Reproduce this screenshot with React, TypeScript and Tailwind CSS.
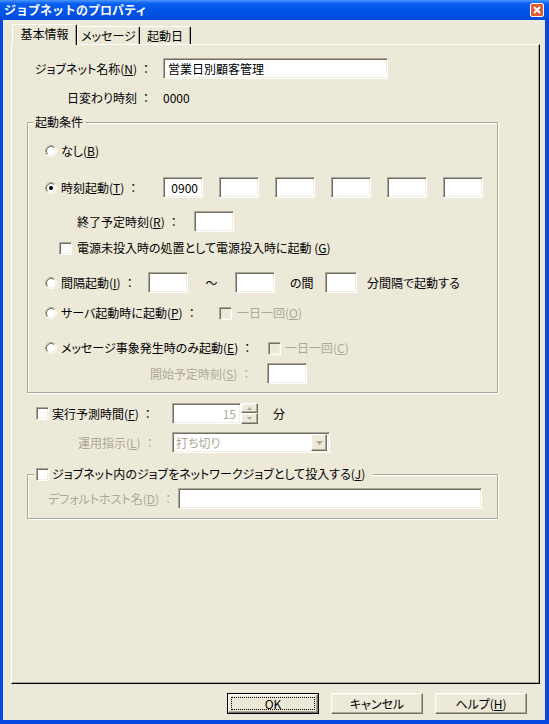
import React from "react";

type BoxProps = { className?: string; children?: React.ReactNode };

// 3D sunken frame (edit boxes, checkboxes)
const Sunken: React.FC<BoxProps> = ({ className = "", children }) => (
  <div
    className={`box-border border border-t-[#aca899] border-l-[#aca899] border-r-white border-b-white shadow-[inset_1px_1px_0_#716f64,inset_-1px_-1px_0_#f1efe2] ${className}`}
  >
    {children}
  </div>
);

// 3D raised frame (buttons, spinner)
const Raised: React.FC<BoxProps> = ({ className = "", children }) => (
  <div
    className={`box-border border border-t-white border-l-white border-r-[#716f64] border-b-[#716f64] bg-[#ece9d8] shadow-[inset_-1px_-1px_0_#aca899,inset_1px_1px_0_#f1efe2] ${className}`}
  >
    {children}
  </div>
);

// full-width colon, keeps its width (no palt)
const Colon = () => <span className="ml-[3px] [font-feature-settings:normal]">：</span>;

const Edit: React.FC<{ className?: string; value?: string; right?: boolean; dim?: boolean }> = ({
  className = "",
  value = "",
  right = false,
  dim = false,
}) => (
  <Sunken
    className={`flex h-[21px] shrink-0 items-center bg-white px-[4px] ${right ? "justify-end" : ""} ${dim ? "text-[#aca899]" : ""} ${className}`}
  >
    {value}
  </Sunken>
);

const Check: React.FC<{ className?: string; disabled?: boolean }> = ({ className = "", disabled = false }) => (
  <Sunken className={`h-[13px] w-[13px] shrink-0 ${disabled ? "bg-[#ece9d8]" : "bg-white"} ${className}`} />
);

const Radio: React.FC<{ className?: string; checked?: boolean }> = ({ className = "", checked = false }) => (
  <svg width="12" height="12" viewBox="0 0 12 12" className={`shrink-0 ${className}`}>
    <circle cx="6" cy="6" r="5" fill="white" />
    <path d="M2.11 9.89 A5.5 5.5 0 0 1 9.89 2.11" fill="none" stroke="#aca899" />
    <path d="M9.89 2.11 A5.5 5.5 0 0 1 2.11 9.89" fill="none" stroke="#ffffff" />
    <path d="M2.82 9.18 A4.5 4.5 0 0 1 9.18 2.82" fill="none" stroke="#716f64" />
    <path d="M9.18 2.82 A4.5 4.5 0 0 1 2.82 9.18" fill="none" stroke="#f1efe2" />
    {checked && <circle cx="6" cy="6" r="2" fill="black" />}
  </svg>
);

const Tri: React.FC<{ up?: boolean }> = ({ up = false }) => (
  <svg width="5" height="3" viewBox="0 0 5 3">
    <path d={up ? "M0 3 L2.5 0 L5 3 Z" : "M0 0 L5 0 L2.5 3 Z"} fill="#aca899" />
  </svg>
);

const App: React.FC = () => {
  return (
    <div className="flex h-[724px] w-[549px] flex-col bg-[#0846e0] text-[12px] leading-[14px] text-black [font-family:'Noto_Sans_CJK_JP',sans-serif] [font-feature-settings:'palt']">
      {/* タイトルバー */}
      <div className="flex h-[20px] items-center bg-[linear-gradient(180deg,#4a96ff_0%,#0a5ff0_18%,#0055e8_55%,#0050e0_85%,#0846e0_100%)] pl-[4px] pr-[5px]">
        <span className="font-bold text-white [font-feature-settings:normal]">ジョブネットのプロパティ</span>
        <div className="ml-auto flex h-[14px] w-[14px] items-center justify-center rounded-[2px] border border-white bg-[#dd5a32]">
          <svg width="8" height="8" viewBox="0 0 8 8">
            <path d="M1 1 L7 7 M7 1 L1 7" stroke="white" strokeWidth="2" />
          </svg>
        </div>
      </div>

      {/* クライアント領域 */}
      <div className="mb-[4px] ml-[3px] mr-[4px] flex flex-1 flex-col bg-[#ece9d8] pt-[4px]">
        {/* タブ */}
        <div className="flex h-[20px] items-end pl-[9px]">
          <div className="relative z-10 -mb-px flex h-[21px] w-[65px] items-center justify-center rounded-t-[2px] border-t border-r border-l border-t-white border-r-black border-l-white bg-[#ece9d8] pb-[2px] shadow-[inset_-1px_0_0_#aca899]">
            基本情報
          </div>
          <div className="flex h-[18px] w-[63px] items-center justify-center rounded-t-[2px] border-t border-r border-l border-t-white border-r-black border-l-white shadow-[inset_-1px_0_0_#aca899]">
            メッセージ
          </div>
          <div className="flex h-[18px] w-[51px] items-center justify-center rounded-t-[2px] border-t border-r border-t-white border-r-black shadow-[inset_-1px_0_0_#aca899]">
            起動日
          </div>
        </div>

        {/* タブページ */}
        <div className="ml-[8px] mr-[5px] flex h-[640px] flex-col border border-t-white border-r-black border-b-black border-l-white shadow-[inset_-1px_-1px_0_#aca899]">
          <div className="mt-[13px] flex h-[21px] items-center">
            <div className="w-[140px] text-right">
              ジョブネット名称(<u>N</u>)
              <Colon />
            </div>
            <Edit className="ml-[11px] w-[225px]" value="営業日別顧客管理" />
          </div>

          <div className="mt-[12px] flex h-[14px] items-center">
            <div className="w-[140px] text-right">
              日変わり時刻
              <Colon />
            </div>
            <div className="ml-[11px]">0000</div>
          </div>

          {/* 起動条件 */}
          <fieldset className="mt-[10px] ml-[15px] flex w-[471px] flex-col border border-[#aca899] pb-[8px] shadow-[inset_1px_1px_0_#fff,1px_1px_0_#fff]">
            <legend className="ml-[5px] bg-[#ece9d8] px-[2px] leading-[14px]">起動条件</legend>

            <div className="mt-[15px] flex h-[14px] items-center">
              <Radio className="ml-[17px]" />
              <span className="ml-[4px]">
                なし(<u>B</u>)
              </span>
            </div>

            <div className="mt-[19px] flex h-[21px] items-center">
              <Radio className="ml-[17px]" checked />
              <span className="ml-[4px] w-[102px]">
                時刻起動(<u>T</u>)
                <Colon />
              </span>
              <Edit className="w-[40px]" value="0900" right />
              <Edit className="ml-[16px] w-[40px]" />
              <Edit className="ml-[16px] w-[40px]" />
              <Edit className="ml-[16px] w-[40px]" />
              <Edit className="ml-[16px] w-[40px]" />
              <Edit className="ml-[16px] w-[40px]" />
            </div>

            <div className="mt-[13px] flex h-[21px] items-center">
              <span className="ml-[49px] w-[117px]">
                終了予定時刻(<u>R</u>)
                <Colon />
              </span>
              <Edit className="w-[40px]" />
            </div>

            <div className="mt-[9px] flex h-[14px] items-center">
              <Check className="ml-[31px]" />
              <span className="ml-[5px]">
                電源未投入時の処置として電源投入時に起動 (<u>G</u>)
              </span>
            </div>

            <div className="mt-[17px] flex h-[21px] items-center">
              <Radio className="ml-[17px]" />
              <span className="ml-[4px] w-[87px]">
                間隔起動(<u>I</u>)
                <Colon />
              </span>
              <Edit className="w-[40px]" />
              <span className="w-[47px] text-center">～</span>
              <Edit className="w-[40px]" />
              <span className="ml-[15px] w-[35px]">の間</span>
              <Edit className="w-[32px]" />
              <span className="ml-[10px]">分間隔で起動する</span>
            </div>

            <div className="mt-[13px] flex h-[14px] items-center">
              <Radio className="ml-[17px]" />
              <span className="ml-[4px] w-[158px]">
                サーバ起動時に起動(<u>P</u>)
                <Colon />
              </span>
              <Check disabled />
              <span className="ml-[5px] text-[#aca899]">
                一日一回(<u>O</u>)
              </span>
            </div>

            <div className="mt-[21px] flex h-[14px] items-center">
              <Radio className="ml-[17px]" />
              <span className="ml-[4px] w-[207px]">
                メッセージ事象発生時のみ起動(<u>E</u>)
                <Colon />
              </span>
              <Check disabled />
              <span className="ml-[4px] text-[#aca899]">
                一日一回(<u>C</u>)
              </span>
            </div>

            <div className="mt-[8px] flex h-[21px] items-center">
              <span className="ml-[122px] w-[117px] text-[#aca899]">
                開始予定時刻(<u>S</u>)
                <Colon />
              </span>
              <Edit className="w-[40px]" />
            </div>
          </fieldset>

          {/* 実行予測時間 */}
          <div className="mt-[10px] flex h-[21px] items-center">
            <Check className="ml-[24px]" />
            <span className="ml-[3px] w-[120px]">
              実行予測時間(<u>F</u>)
              <Colon />
            </span>
            <Edit className="w-[69px]" value="15" right dim />
            <div className="flex h-[21px] w-[17px] flex-col">
              <Raised className="flex h-[10px] items-center justify-center">
                <Tri up />
              </Raised>
              <Raised className="flex h-[11px] items-center justify-center">
                <Tri />
              </Raised>
            </div>
            <span className="ml-[15px]">分</span>
          </div>

          <div className="mt-[8px] flex h-[21px] items-center">
            <span className="ml-[66px] w-[94px] text-[#aca899]">
              運用指示(<u>L</u>)
              <Colon />
            </span>
            <Sunken className="flex h-[21px] w-[158px] items-center bg-white pr-[2px] pl-[3px] text-[#aca899]">
              <span className="flex-1">打ち切り</span>
              <Raised className="flex h-[17px] w-[16px] items-center justify-center">
                <svg width="7" height="4" viewBox="0 0 7 4">
                  <path d="M0 0 L7 0 L3.5 4 Z" fill="#aca899" />
                </svg>
              </Raised>
            </Sunken>
          </div>

          {/* ネットワークジョブ */}
          <fieldset className="mt-[14px] ml-[15px] flex w-[471px] flex-col border border-[#aca899] pb-[9px] shadow-[inset_1px_1px_0_#fff,1px_1px_0_#fff]">
            <legend className="ml-[6px] flex h-[14px] items-center bg-[#ece9d8] pr-[8px] pl-[2px]">
              <Check />
              <span className="ml-[3px]">
                ジョブネット内のジョブをネットワークジョブとして投入する(<u>J</u>)
              </span>
            </legend>
            <div className="mt-[7px] flex h-[21px] items-center">
              <span className="ml-[20px] w-[130px] text-[#aca899]">
                デフォルトホスト名(<u>D</u>)
                <Colon />
              </span>
              <Edit className="w-[304px]" />
            </div>
          </fieldset>
        </div>

        {/* ボタン */}
        <div className="mt-[9px] flex justify-end gap-[12px] pr-[18px]">
          <div className="flex h-[21px] w-[92px] border border-black">
            <Raised className="flex flex-1 items-center justify-center">
              <span className="flex h-[13px] w-[84px] items-center justify-center border border-dotted border-black">
                OK
              </span>
            </Raised>
          </div>
          <Raised className="flex h-[21px] w-[92px] items-center justify-center">キャンセル</Raised>
          <Raised className="flex h-[21px] w-[92px] items-center justify-center">
            ヘルプ(<u>H</u>)
          </Raised>
        </div>
      </div>
    </div>
  );
};

export default App;
